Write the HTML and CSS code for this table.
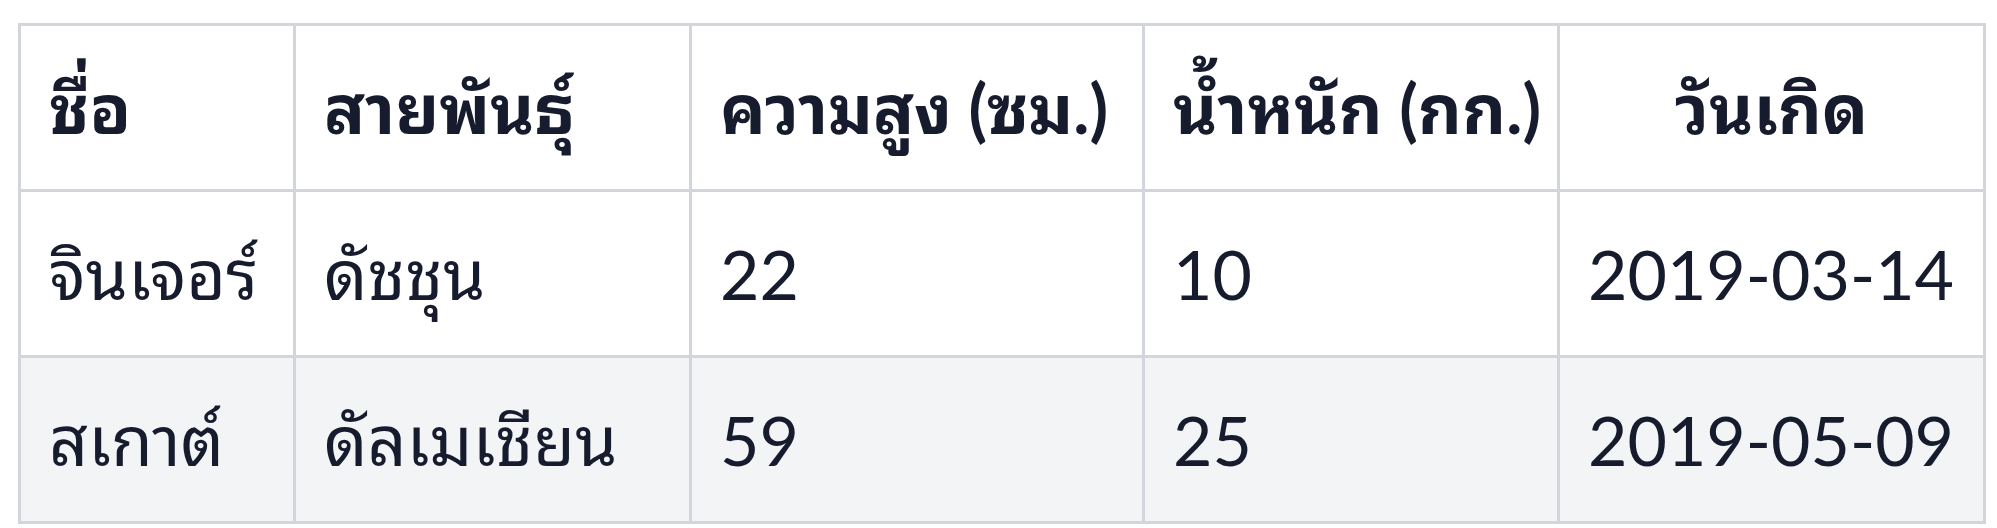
FILE: index.html
```html
<!DOCTYPE html>
<html lang="th">
<head>
<meta charset="utf-8">
<title>ตารางสุนัข</title>
<link rel="stylesheet" href="styles.css">
</head>
<body>
<table class="dogs">
  <colgroup>
    <col class="c1"><col class="c2"><col class="c3"><col class="c4"><col class="c5">
  </colgroup>
  <thead>
    <tr>
      <th>ชื่อ</th>
      <th>สายพันธุ์</th>
      <th>ความสูง (ซม.)</th>
      <th>น้ำหนัก (กก.)</th>
      <th class="center">วันเกิด</th>
    </tr>
  </thead>
  <tbody>
    <tr>
      <td>จินเจอร์</td>
      <td>ดัชชุน</td>
      <td>22</td>
      <td>10</td>
      <td>2019-03-14</td>
    </tr>
    <tr class="alt">
      <td>สเกาต์</td>
      <td>ดัลเมเชียน</td>
      <td>59</td>
      <td>25</td>
      <td>2019-05-09</td>
    </tr>
  </tbody>
</table>
</body>
</html>
```
FILE: styles.css
```css
html, body {
  margin: 0;
  padding: 0;
  background: #ffffff;
}
body {
  padding: 23px 0 0 18px;
  font-family: Lato, "Noto Sans Thai Looped", Loma, Garuda, Waree, "Noto Sans", "Noto Sans Thai", sans-serif;
  color: #161b2d;
}
.dogs {
  border-collapse: collapse;
  table-layout: fixed;
  width: 1965px;
  font-size: 68px;
  line-height: 1.5;
}
.c1 { width: 275px; }
.c2 { width: 396px; }
.c3 { width: 453px; }
.c4 { width: 415px; }
.c5 { width: 426px; }
.dogs th,
.dogs td {
  border: 3px solid #d2d5db;
  padding: 28px 0 28px 28px;
  text-align: left;
  vertical-align: middle;
  white-space: nowrap;
  height: 107px;
}
.dogs th {
  font-weight: 700;
}
.dogs th.center {
  text-align: center;
  padding-left: 0;
}
.dogs td {
  font-weight: 400;
}
.dogs tr.alt td {
  background: #f3f4f6;
}
```
